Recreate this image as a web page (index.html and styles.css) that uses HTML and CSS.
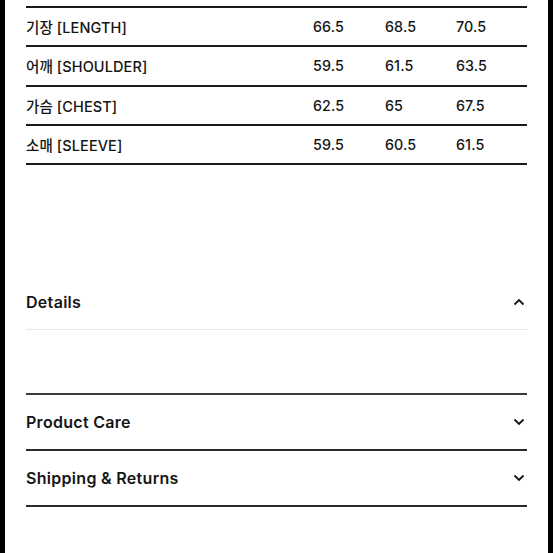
FILE: index.html
```html
<!DOCTYPE html>
<html lang="ko">
<head>
<meta charset="utf-8">
<link rel="stylesheet" href="styles.css">
</head>
<body>
<div class="page">
  <div class="sheet">
    <div class="size-table">
      <div class="row"><span class="label">기장 [LENGTH]</span><span>66.5</span><span>68.5</span><span>70.5</span></div>
      <div class="row"><span class="label">어깨 [SHOULDER]</span><span>59.5</span><span>61.5</span><span>63.5</span></div>
      <div class="row"><span class="label">가슴 [CHEST]</span><span>62.5</span><span>65</span><span>67.5</span></div>
      <div class="row"><span class="label">소매 [SLEEVE]</span><span>59.5</span><span>60.5</span><span>61.5</span></div>
    </div>

    <div class="accordion">
      <div class="acc-item open">
        <div class="acc-head">
          <span>Details</span>
          <svg class="chev" width="12" height="8" viewBox="0 0 12 8"><path d="M1.5 6.5 L6 2 L10.5 6.5" fill="none" stroke="#111" stroke-width="1.8"/></svg>
        </div>
        <div class="acc-body"></div>
      </div>
      <div class="acc-item">
        <div class="acc-head">
          <span>Product Care</span>
          <svg class="chev" width="12" height="8" viewBox="0 0 12 8"><path d="M1.5 1.5 L6 6 L10.5 1.5" fill="none" stroke="#111" stroke-width="1.8"/></svg>
        </div>
      </div>
      <div class="acc-item">
        <div class="acc-head">
          <span>Shipping &amp; Returns</span>
          <svg class="chev" width="12" height="8" viewBox="0 0 12 8"><path d="M1.5 1.5 L6 6 L10.5 1.5" fill="none" stroke="#111" stroke-width="1.8"/></svg>
        </div>
      </div>
    </div>
  </div>
</div>
</body>
</html>
```

FILE: styles.css
```css
html, body {
  margin: 0;
  padding: 0;
  background: #000;
}
.page {
  width: 553px;
  height: 553px;
  background: #000;
  display: flex;
}
.sheet {
  margin-left: 5px;
  width: 543px;
  height: 553px;
  background: #fff;
  box-sizing: border-box;
  padding: 6px 21px 0 21px;
  font-family: Inter, "Noto Sans CJK KR", sans-serif;
  color: #151515;
}
.size-table {
  border-top: 2px solid #1a1a1a;
}
.row {
  display: grid;
  grid-template-columns: 287px 72px 71px 1fr;
  align-items: center;
  height: 37.3px;
  border-bottom: 2px solid #1a1a1a;
  font-size: 14.5px;
  font-weight: 500;
  letter-spacing: 0.1px;
}
.row span:not(.label) {
  font-size: 14.3px;
}
.accordion {
  margin-top: 110px;
}
.acc-head {
  display: flex;
  justify-content: space-between;
  align-items: center;
  height: 54px;
  font-size: 16px;
  font-weight: 600;
  letter-spacing: 0.3px;
}
.chev {
  margin-right: 2px;
}
.acc-item.open .acc-head {
  border-bottom: 1px solid #e6e6e6;
}
.acc-body {
  height: 63px;
  border-bottom: 2px solid #3a3a3a;
}
.acc-item:not(.open) {
  border-bottom: 2px solid #2a2a2a;
}
```
